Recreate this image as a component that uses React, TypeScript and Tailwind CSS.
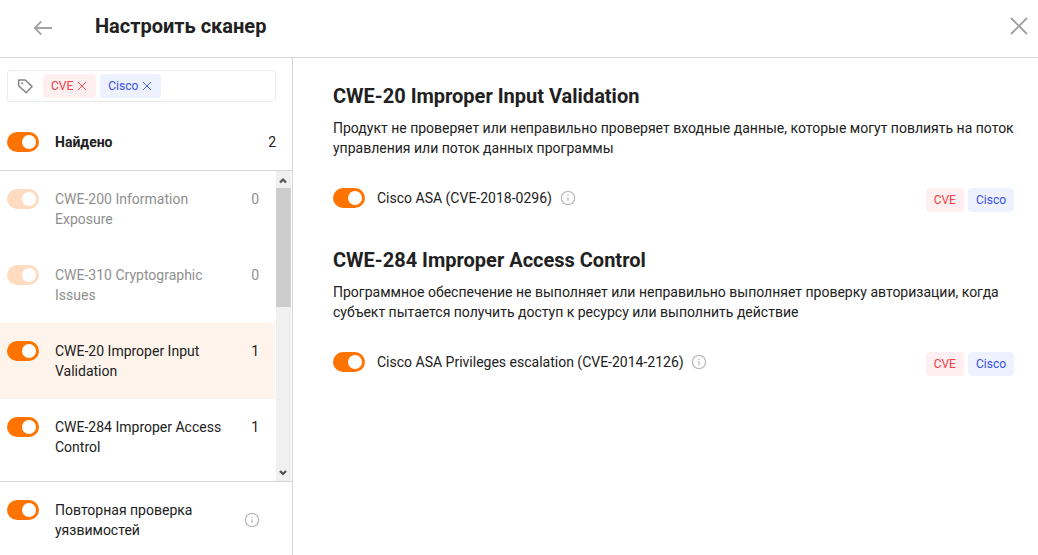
import { useState } from 'react';

type TagName = 'CVE' | 'Cisco';

const tagStyles: Record<TagName, string> = {
  CVE: 'bg-[#ffeff0] text-[#f03e44]',
  Cisco: 'bg-[#eef1ff] text-[#3650e4]',
};

const categories = [
  { name: 'CWE-200 Information Exposure', count: 0, active: false },
  { name: 'CWE-310 Cryptographic Issues', count: 0, active: false },
  { name: 'CWE-20 Improper Input Validation', count: 1, active: true },
  { name: 'CWE-284 Improper Access Control', count: 1, active: false },
];

const groups = [
  {
    title: 'CWE-20 Improper Input Validation',
    text: 'Продукт не проверяет или неправильно проверяет входные данные, которые могут повлиять на поток управления или поток данных программы',
    check: 'Cisco ASA (CVE-2018-0296)',
  },
  {
    title: 'CWE-284 Improper Access Control',
    text: 'Программное обеспечение не выполняет или неправильно выполняет проверку авторизации, когда субъект пытается получить доступ к ресурсу или выполнить действие',
    check: 'Cisco ASA Privileges escalation (CVE-2014-2126)',
  },
];

function Toggle({ disabled = false }: { disabled?: boolean }) {
  const [on, setOn] = useState(true);
  return (
    <button
      type="button"
      role="switch"
      aria-checked={on}
      disabled={disabled}
      onClick={() => setOn(!on)}
      className={`flex h-5 w-8 shrink-0 items-center rounded-full px-[3px] ${on ? 'justify-end' : 'justify-start'} ${
        disabled ? 'bg-[#ffdcc0]' : on ? 'bg-[#ff7300]' : 'bg-[#c4c4c4]'
      }`}
    >
      <span className="size-3.5 rounded-full bg-white" />
    </button>
  );
}

function InfoIcon() {
  return (
    <svg className="size-4 shrink-0" viewBox="0 0 16 16" fill="none">
      <circle cx="8" cy="8" r="6.6" stroke="#bdbdbd" strokeWidth="1.35" />
      <path d="M8 7.2v3.9M8 4.8v1.3" stroke="#bdbdbd" strokeWidth="1.4" />
    </svg>
  );
}

function Tag({ name, removable = false }: { name: TagName; removable?: boolean }) {
  return (
    <span className={`flex h-6 items-center rounded px-2 text-xs ${tagStyles[name]}`}>
      {name}
      {removable && (
        <svg className="mr-px ml-1 size-[10px]" viewBox="0 0 10 10" fill="none" stroke="currentColor" strokeWidth="0.9">
          <path d="M1 1l8 8M9 1l-8 8" />
        </svg>
      )}
    </span>
  );
}

export default function App() {
  return (
    <div className="flex h-[555px] w-[1038px] flex-col overflow-hidden bg-white font-[Roboto,sans-serif] text-sm leading-5 text-[#212121]">
      <header className="flex h-[58px] shrink-0 items-center border-b border-[#d6d6d6] pr-2.5 pl-[33px]">
        <svg className="mb-px h-4 w-5" viewBox="0 0 20 16" fill="none" stroke="#a3a3a3" strokeWidth="1.9">
          <path d="M19 8H2M8.2 1.4L1.8 8L8.2 14.6" />
        </svg>
        <h1 className="mb-1.5 ml-[42px] text-xl leading-7 font-bold">Настроить сканер</h1>
        <svg className="mb-[5px] ml-auto size-[18px]" viewBox="0 0 18 18" fill="none" stroke="#a0a0a0" strokeWidth="1.8">
          <path d="M1 1l16 16M17 1L1 17" />
        </svg>
      </header>

      <div className="flex min-h-0 flex-1">
        <aside className="flex w-[293px] shrink-0 flex-col border-r border-[#d6d6d6]">
          <div className="flex h-[113px] shrink-0 flex-col border-b border-[#d6d6d6] pt-3 pr-4 pl-[7px]">
            <div className="flex h-8 items-center gap-1 rounded-[3px] border border-[#ebebeb] pl-[9px]">
              <svg className="mr-[5px] size-[17px]" viewBox="0 0 17 17" fill="none" stroke="#858585" strokeWidth="1.5" strokeLinejoin="round">
                <path d="M1.7 2h6.6l6.8 6.6-6 6.2-7.4-7z" />
                <circle cx="5.2" cy="5.4" r="0.8" fill="#858585" strokeWidth="0.5" />
              </svg>
              <Tag name="CVE" removable />
              <Tag name="Cisco" removable />
            </div>
            <div className="mt-[30px] flex items-center gap-4">
              <Toggle />
              <span className="font-bold">Найдено</span>
              <span className="ml-auto">2</span>
            </div>
          </div>

          <div className="flex h-[310px] shrink-0">
            <div className="w-[275px]">
              {categories.map((c) => (
                <div key={c.name} className={`flex h-[76px] items-start pt-[18px] pr-4 pl-[7px] ${c.active ? 'bg-[#fff4eb]' : ''}`}>
                  <Toggle disabled={c.count === 0} />
                  <span className={`ml-4 w-[172px] ${c.count === 0 ? 'text-[#8f8f8f]' : ''}`}>{c.name}</span>
                  <span className={`ml-auto ${c.count === 0 ? 'text-[#8f8f8f]' : ''}`}>{c.count}</span>
                </div>
              ))}
            </div>
            <div className="ml-px flex w-[15px] flex-col bg-[#f0f0f0]">
              <div className="flex h-[17px] items-center justify-center">
                <svg className="mr-px size-2" viewBox="0 0 8 8" fill="none" stroke="#505050" strokeWidth="2.2">
                  <path d="M1 6.5l3-3 3 3" />
                </svg>
              </div>
              <div className="h-[119px] bg-[#cdcdcd]" />
              <div className="mt-auto flex h-[17px] items-center justify-center">
                <svg className="mr-px size-2" viewBox="0 0 8 8" fill="none" stroke="#505050" strokeWidth="2.2">
                  <path d="M1 2l3 3 3-3" />
                </svg>
              </div>
            </div>
          </div>

          <div className="flex flex-1 items-start border-t border-[#d6d6d6] pt-[18px] pr-8 pl-[7px]">
            <Toggle />
            <span className="ml-4 w-[172px]">Повторная проверка уязвимостей</span>
            <span className="mt-3 ml-auto">
              <InfoIcon />
            </span>
          </div>
        </aside>

        <main className="flex flex-1 flex-col gap-12 pt-6 pr-6 pl-10">
          {groups.map((g) => (
            <section key={g.title} className="h-[116px]">
              <h2 className="text-xl leading-7 font-bold">{g.title}</h2>
              <p className="mt-2 -mr-2">{g.text}</p>
              <div className="mt-[30px] flex items-start">
                <Toggle />
                <span className="ml-3">{g.check}</span>
                <span className="mt-0.5 ml-[7.6px]">
                  <InfoIcon />
                </span>
                <div className="ml-auto flex gap-1">
                  <Tag name="CVE" />
                  <Tag name="Cisco" />
                </div>
              </div>
            </section>
          ))}
        </main>
      </div>
    </div>
  );
}
